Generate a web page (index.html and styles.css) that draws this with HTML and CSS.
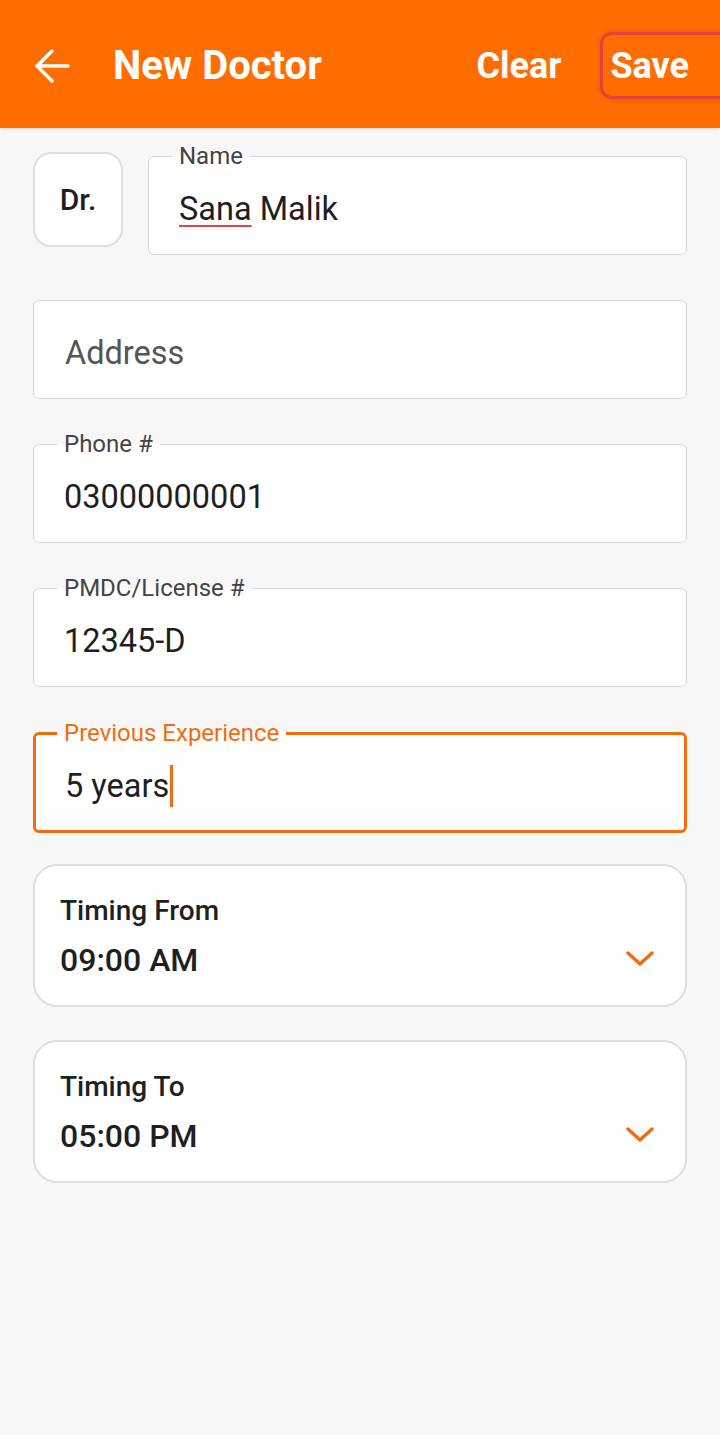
FILE: index.html
```html
<!DOCTYPE html>
<html lang="en">
<head>
  <meta charset="UTF-8" />
  <meta name="viewport" content="width=device-width, initial-scale=1.0"/>
  <title>New Doctor</title>
  <link rel="stylesheet" href="styles.css">
</head>
<body>
  <header class="topbar">
    <button class="back" aria-label="Back">
      <svg width="40" height="40" viewBox="0 0 40 40">
        <path d="M36 20H6M20 5L5 20L20 35" fill="none" stroke="#fff" stroke-width="3.5" stroke-linecap="round" stroke-linejoin="round"/>
      </svg>
    </button>
    <h1 class="title">New Doctor</h1>
    <button class="action">Clear</button>
    <button class="action save">Save</button>
  </header>

  <main class="form">
    <div class="name-row">
      <div class="prefix">Dr.</div>
      <fieldset class="field">
        <legend>Name</legend>
        <div class="value"><span class="misspelt">Sana</span> Malik</div>
      </fieldset>
    </div>

    <div class="field plain">
      <div class="placeholder">Address</div>
    </div>

    <fieldset class="field gap">
      <legend>Phone #</legend>
      <div class="value">03000000001</div>
    </fieldset>

    <fieldset class="field gap">
      <legend>PMDC/License #</legend>
      <div class="value">12345-D</div>
    </fieldset>

    <fieldset class="field gap focused">
      <legend>Previous Experience</legend>
      <div class="value">5 years<span class="caret"></span></div>
    </fieldset>

    <div class="picker first">
      <div class="picker-label">Timing From</div>
      <div class="picker-row">
        <span class="picker-value">09:00 AM</span>
        <svg class="chevron" width="28" height="16" viewBox="0 0 28 16">
          <path d="M2 2L14 13L26 2" fill="none" stroke="#f26c0d" stroke-width="3.5" stroke-linecap="round" stroke-linejoin="round"/>
        </svg>
      </div>
    </div>

    <div class="picker">
      <div class="picker-label">Timing To</div>
      <div class="picker-row">
        <span class="picker-value">05:00 PM</span>
        <svg class="chevron" width="28" height="16" viewBox="0 0 28 16">
          <path d="M2 2L14 13L26 2" fill="none" stroke="#f26c0d" stroke-width="3.5" stroke-linecap="round" stroke-linejoin="round"/>
        </svg>
      </div>
    </div>
  </main>
</body>
</html>
```

FILE: styles.css
```css
* { box-sizing: border-box; margin: 0; padding: 0; }

body {
  font-family: Roboto, "Noto Sans", sans-serif;
  background-color: #f7f7f7;
  color: #1f1f1f;
  overflow-x: hidden;
}

.topbar {
  display: flex;
  align-items: center;
  height: 128px;
  padding-top: 3px;
  background-color: #ff6d00;
  box-shadow: 0 1px 3px rgba(0, 0, 0, 0.15);
  overflow: hidden;
}

.topbar button {
  border: none;
  background: none;
  color: #fff;
  font-family: inherit;
  cursor: pointer;
}

.back {
  display: flex;
  margin-left: 32px;
  width: 40px;
  height: 40px;
}

.title {
  margin-left: 41px;
  flex-grow: 1;
  color: #fff;
  font-size: 40px;
  font-weight: 700;
}

.action {
  font-size: 36px;
  font-weight: 700;
}

.save {
  margin-left: 39px;
  margin-right: -20px;
  height: 67px;
  padding: 0 48px 0 7px;
  border: 3px solid #e0443a !important;
  border-radius: 12px;
  box-shadow: 0 0 6px rgba(200, 40, 40, 0.35);
}

.form {
  padding: 0 33px;
}

.name-row {
  display: flex;
  align-items: flex-start;
  gap: 25px;
  margin-top: 14px;
}

.prefix {
  flex: 0 0 90px;
  height: 95px;
  margin-top: 10px;
  display: flex;
  align-items: center;
  justify-content: center;
  background: #fff;
  border: 2px solid #dedede;
  border-radius: 18px;
  font-size: 30px;
  font-weight: 500;
}

.field {
  display: block;
  min-width: 0;
  flex-grow: 1;
  background: #fff;
  border: 1px solid #d6d6d6;
  border-radius: 6px;
}

.field legend {
  margin-left: 23px;
  padding: 0 7px;
  font-size: 24px;
  line-height: 28px;
  color: #444;
}

.value {
  padding: 20px 30px 26px;
  font-size: 32.5px;
  line-height: 38px;
}

.misspelt {
  text-decoration: underline;
  text-decoration-color: #e8424f;
  text-decoration-thickness: 2px;
  text-underline-offset: 5px;
}

.plain {
  height: 99px;
  margin-top: 45px;
  display: flex;
  align-items: center;
  padding: 6px 31px 0;
}

.placeholder {
  font-size: 32.5px;
  color: #555;
}

.gap {
  margin-top: 31px;
}

.focused {
  margin-top: 32px;
  border: 3px solid #f26c0d;
}

.focused legend {
  margin-left: 21px;
  color: #f26c0d;
}

.focused .value {
  padding: 18px 29px 23px;
}

.caret {
  display: inline-block;
  width: 3px;
  height: 42px;
  margin-left: 1px;
  vertical-align: -10px;
  background: #f26c0d;
}

.picker {
  margin-top: 33px;
  padding: 28px 31px 25px 25px;
  background: #fff;
  border: 2px solid #dedede;
  border-radius: 24px;
}

.picker.first {
  margin-top: 31px;
}

.picker-label {
  font-size: 28px;
  line-height: 34px;
  font-weight: 500;
}

.picker-row {
  display: flex;
  align-items: center;
  justify-content: space-between;
  margin-top: 12px;
}

.picker-value {
  font-size: 32px;
  line-height: 40px;
  font-weight: 500;
}

.chevron {
  margin-top: -2px;
}
```
